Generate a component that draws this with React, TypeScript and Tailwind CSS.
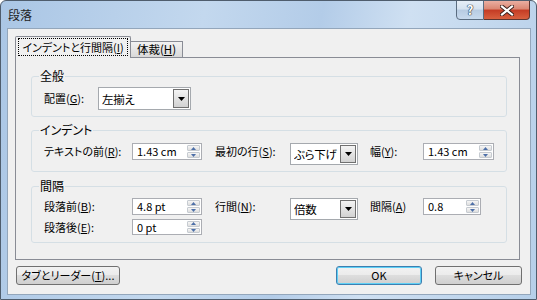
import React from 'react';

const Spin = ({ value, w, h }: { value: string; w: string; h: string }) => (
  <div className={`${w} ${h} flex items-stretch border border-[#abadb3] bg-white`}>
    <span className="flex-1 pl-[4px] text-[11px] leading-[15px]">{value}</span>
    <div className="my-px mr-px flex w-[13px] flex-col gap-px">
      <div className="flex flex-1 items-center justify-center rounded-[1px] border border-[#c6cbd1] bg-gradient-to-b from-[#f6f6f6] to-[#dedede]">
        <svg width="5" height="3" viewBox="0 0 5 3">
          <path d="M2.5 0 L5 3 L0 3 Z" fill="#4d6fa8" />
        </svg>
      </div>
      <div className="flex flex-1 items-center justify-center rounded-[1px] border border-[#c6cbd1] bg-gradient-to-b from-[#f6f6f6] to-[#dedede]">
        <svg width="5" height="3" viewBox="0 0 5 3">
          <path d="M0 0 L5 0 L2.5 3 Z" fill="#4d6fa8" />
        </svg>
      </div>
    </div>
  </div>
);

const Combo = ({ value, w, h }: { value: string; w: string; h: string }) => (
  <div className={`${w} ${h} flex items-center border border-[#a5a9ae] bg-white pl-[3px] pr-[1px]`}>
    <span className="flex-1 overflow-hidden text-[11.5px] leading-[14px] tracking-[-0.3px]">{value}</span>
    <div className="flex h-[calc(100%-2px)] w-[16px] shrink-0 items-center justify-center border border-[#707070] bg-gradient-to-b from-[#f4f4f4] to-[#d2d2d2]">
      <svg width="7" height="4" viewBox="0 0 7 4">
        <path d="M0 0 H7 L3.5 4 Z" fill="#000" />
      </svg>
    </div>
  </div>
);

const Label = ({ text, k, w, rest = '):' }: { text: string; k: string; w: string; rest?: string }) => (
  <span className={`${w} block shrink-0 text-[11px] leading-[17px]`}>
    {text}(<span className="underline">{k}</span>{rest}
  </span>
);

const Group = ({ title, className, children }: { title: string; className: string; children: React.ReactNode }) => (
  <fieldset className={`w-[476px] rounded-[3px] border border-[#d5dfe5] ${className}`}>
    <legend className="ml-[7px] px-[1px] text-[12px] leading-[14px]">{title}</legend>
    {children}
  </fieldset>
);

const btn =
  'h-[19px] rounded-[3px] border text-[11px] leading-[17px] text-center bg-[linear-gradient(#f2f2f2,#ebebeb_50%,#dddddd_50%,#cfcfcf)]';

export default function App() {
  return (
    <div className="flex h-[300px] w-[537px] flex-col overflow-hidden whitespace-nowrap rounded-t-[6px] border border-[#4f5d6d] bg-[linear-gradient(100deg,#aac6e5,#c3d8ee_35%,#b3cce8_55%,#cfe0f2_70%,#b6cfe9)] font-['Noto_Sans_CJK_JP','Liberation_Sans',sans-serif] text-[#000] [font-feature-settings:'palt']">
      {/* title bar */}
      <div className="flex h-[27px] items-start justify-between">
        <span className="pl-[7px] pt-[7px] text-[12px] leading-[14px] text-[#1e1e1e]">段落</span>
        <div className="-mt-px mr-[6px] flex">
          <div className="flex h-[20px] w-[28px] items-center justify-center rounded-bl-[4px] border border-[#5a6c80] bg-[linear-gradient(#e6eef7,#d5e2f0_45%,#b7cbe2_50%,#c8daee)] text-[13px] font-bold leading-[16px] text-white [text-shadow:0_0_1px_#1d2c3f,0_0_1px_#1d2c3f,0_0_1px_#1d2c3f]">
            ?
          </div>
          <div className="flex h-[20px] w-[46px] items-center justify-center rounded-br-[4px] border border-l-0 border-[#5c3530] bg-[linear-gradient(#eaaea1,#da8672_45%,#c43b24_50%,#d8603f)]">
            <svg width="14" height="11" viewBox="0 0 14 11">
              <path d="M2 1.5 L12 9.5 M12 1.5 L2 9.5" stroke="#3a1f1b" strokeWidth="4" strokeLinecap="square" />
              <path d="M2 1.5 L12 9.5 M12 1.5 L2 9.5" stroke="#fff" strokeWidth="2.2" strokeLinecap="square" />
            </svg>
          </div>
        </div>
      </div>

      {/* client area */}
      <div className="ml-[6px] flex h-[267px] w-[524px] flex-col border border-[#93a6bb] bg-[#f0f0f0]">
        {/* tabs */}
        <div className="flex items-end pl-[7px] pt-[7px]">
          <div className="relative z-10 -mb-px h-[22px] w-[116px] rounded-t-[2px] border border-b-0 border-[#898c95] bg-[#f0f0f0] pl-[2px] pt-px">
            <span className="block h-[18px] w-[110px] border border-dotted border-black text-center text-[11px] leading-[16px]">
              インデントと行間隔(<span className="underline">I</span>)
            </span>
          </div>
          <div className="-ml-px h-[16px] w-[53px] border border-b-0 border-[#898c95] bg-gradient-to-b from-[#f2f2f2] to-[#d9d9d9] text-center text-[11.5px] leading-[15px]">
            体裁(<span className="underline">H</span>)
          </div>
        </div>

        {/* tab panel */}
        <div className="ml-[7px] flex h-[203px] w-[505px] flex-col border border-[#898c95] bg-[#f0f0f0] pl-[15px]">
          <Group title="全般" className="mt-[11px] pb-[6px] pt-[4px]">
            <div className="flex items-center pl-[12px]">
              <Label text="配置" k="G" w="w-[54px]" />
              <Combo value="左揃え" w="w-[93px]" h="h-[23px]" />
            </div>
          </Group>

          <Group title="インデント" className="mt-[6px] pb-[6px] pt-[6px]">
            <div className="flex items-start pl-[12px]">
              <Label text="テキストの前" k="R" w="w-[88px]" />
              <Spin value="1.43 cm" w="w-[70px]" h="h-[17px]" />
              <Label text="最初の行" k="S" w="ml-[13px] w-[75px]" />
              <Combo value="ぶら下げ" w="w-[68px]" h="h-[22px]" />
              <Label text="幅" k="Y" w="ml-[12px] w-[53px]" />
              <Spin value="1.43 cm" w="w-[71px]" h="h-[17px]" />
            </div>
          </Group>

          <Group title="間隔" className="mt-[7px] pb-[6px] pt-[5px]">
            <div className="flex items-start pl-[12px]">
              <div className="flex flex-col gap-[4px]">
                <div className="flex items-start">
                  <Label text="段落前" k="B" w="w-[88px]" />
                  <Spin value="4.8 pt" w="w-[70px]" h="h-[17px]" />
                </div>
                <div className="flex items-start">
                  <Label text="段落後" k="E" w="w-[88px]" />
                  <Spin value="0 pt" w="w-[70px]" h="h-[16px]" />
                </div>
              </div>
              <Label text="行間" k="N" w="ml-[13px] w-[75px]" />
              <Combo value="倍数" w="w-[68px]" h="h-[22px]" />
              <Label text="間隔" k="A" w="ml-[12px] w-[53px]" rest=")" />
              <Spin value="0.8" w="w-[58px]" h="h-[17px]" />
            </div>
          </Group>
        </div>

        {/* buttons */}
        <div className="mt-[6px] flex items-start pl-[8px] pr-[8px]">
          <div className={`${btn} w-[104px] border-[#707070]`}>
            タブとリーダー(<span className="underline">T</span>)...
          </div>
          <div className="flex-1" />
          <div className={`${btn} w-[86px] border-[#3c7fb1] shadow-[inset_0_0_0_1px_#5fd0f5]`}>OK</div>
          <div className={`${btn} ml-[13px] w-[87px] border-[#707070]`}>キャンセル</div>
        </div>
      </div>
    </div>
  );
}
